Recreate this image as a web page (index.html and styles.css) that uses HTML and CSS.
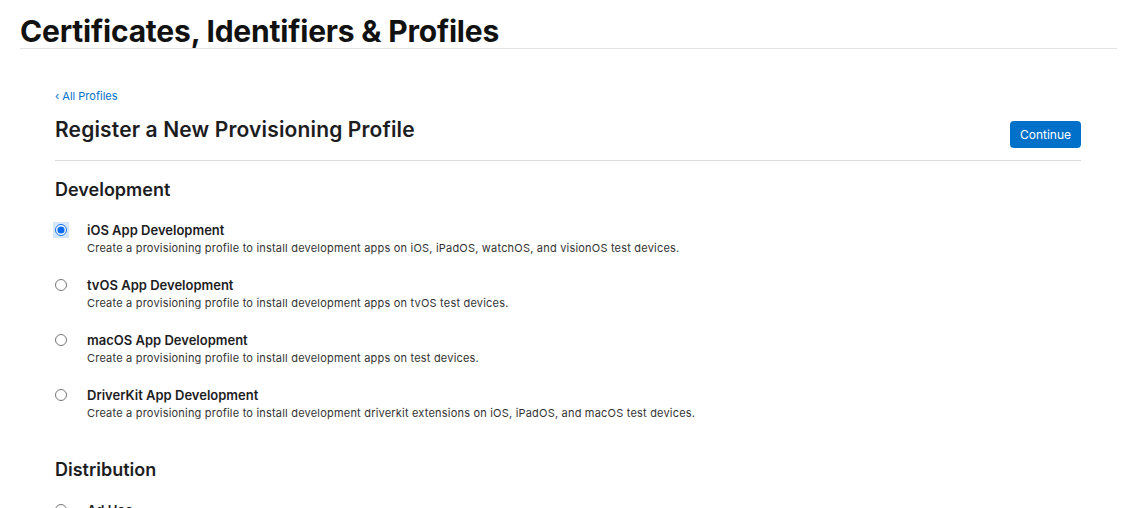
FILE: index.html
```html
<!DOCTYPE html>
<html lang="en">
<head>
<meta charset="utf-8">
<title>Register a New Provisioning Profile</title>
<link rel="stylesheet" href="styles.css">
</head>
<body>
<header class="page-header">
  <h1 class="page-title">Certificates, Identifiers &amp; Profiles</h1>
</header>
<main class="content">
  <a class="back-link" href="#">‹ All Profiles</a>
  <div class="title-row">
    <h2 class="form-title">Register a New Provisioning Profile</h2>
    <button class="btn-continue" type="button">Continue</button>
  </div>
  <section class="group">
    <h3 class="group-title">Development</h3>
    <div class="options">
      <label class="option">
        <span class="radio-wrap focused"><input type="radio" name="ptype" class="radio" checked></span>
        <span class="option-text">
          <span class="option-name">iOS App Development</span>
          <span class="option-desc">Create a provisioning profile to install development apps on iOS, iPadOS, watchOS, and visionOS test devices.</span>
        </span>
      </label>
      <label class="option">
        <span class="radio-wrap"><input type="radio" name="ptype" class="radio"></span>
        <span class="option-text">
          <span class="option-name">tvOS App Development</span>
          <span class="option-desc">Create a provisioning profile to install development apps on tvOS test devices.</span>
        </span>
      </label>
      <label class="option">
        <span class="radio-wrap"><input type="radio" name="ptype" class="radio"></span>
        <span class="option-text">
          <span class="option-name">macOS App Development</span>
          <span class="option-desc">Create a provisioning profile to install development apps on test devices.</span>
        </span>
      </label>
      <label class="option">
        <span class="radio-wrap"><input type="radio" name="ptype" class="radio"></span>
        <span class="option-text">
          <span class="option-name">DriverKit App Development</span>
          <span class="option-desc">Create a provisioning profile to install development driverkit extensions on iOS, iPadOS, and macOS test devices.</span>
        </span>
      </label>
    </div>
  </section>
  <section class="group">
    <h3 class="group-title">Distribution</h3>
    <div class="options">
      <label class="option">
        <span class="radio-wrap"><input type="radio" name="ptype" class="radio"></span>
        <span class="option-text">
          <span class="option-name">Ad Hoc</span>
        </span>
      </label>
    </div>
  </section>
</main>
</body>
</html>
```
FILE: styles.css
```css
* { box-sizing: border-box; }
html, body { margin: 0; padding: 0; background: #fff; }
body {
  font-family: Inter, "Noto Sans", "Liberation Sans", sans-serif;
  color: #1d1d1f;
  overflow: hidden;
  height: 508px;
}
.page-header {
  margin: 0 29px 0 20px;
  border-bottom: 1px solid #e3e3e3;
  padding-top: 13px;
  height: 49px;
}
.page-title {
  margin: 0;
  font-size: 30px;
  line-height: 36px;
  font-weight: 700;
  letter-spacing: -0.2px;
  color: #111;
}
.content {
  margin: 0 65px 0 55px;
  padding-top: 40px;
}
.back-link {
  display: block;
  font-size: 11px;
  line-height: 14px;
  color: #0070c9;
  text-decoration: none;
}
.title-row {
  display: flex;
  align-items: flex-start;
  justify-content: space-between;
  border-bottom: 1px solid #dcdcdc;
  padding: 14px 0 12px;
}
.form-title {
  margin: 0;
  font-size: 21px;
  line-height: 26px;
  font-weight: 600;
  letter-spacing: 0.15px;
  color: #1d1d1f;
}
.btn-continue {
  margin-top: 4px;
  width: 71px;
  height: 27px;
  border: 0;
  border-radius: 4px;
  background: #0070c9;
  color: #fff;
  font-family: inherit;
  font-size: 12px;
  padding: 0;
}
.group-title {
  margin: 0;
  padding-top: 18px;
  font-size: 18px;
  line-height: 22px;
  font-weight: 600;
}
.options {
  display: flex;
  flex-direction: column;
  gap: 22px;
  padding-top: 21px;
}
.option {
  display: flex;
  align-items: flex-start;
  gap: 18px;
}
.radio-wrap {
  width: 16px;
  height: 16px;
  margin: 0 0 0 -2px;
  display: flex;
  align-items: center;
  justify-content: center;
  flex: none;
}
.radio-wrap.focused { background: #d5e6fb; }
.radio {
  margin: 0;
  width: 12px;
  height: 12px;
  accent-color: #0a6cf5;
}
.option-text {
  display: flex;
  flex-direction: column;
  gap: 3px;
}
.option-name {
  font-size: 13px;
  line-height: 16px;
  font-weight: 600;
  color: #1d1d1f;
}
.option-desc {
  font-size: 11px;
  line-height: 14px;
  color: #333;
  letter-spacing: 0.2px;
}
.group + .group .group-title { padding-top: 39px; }
```
